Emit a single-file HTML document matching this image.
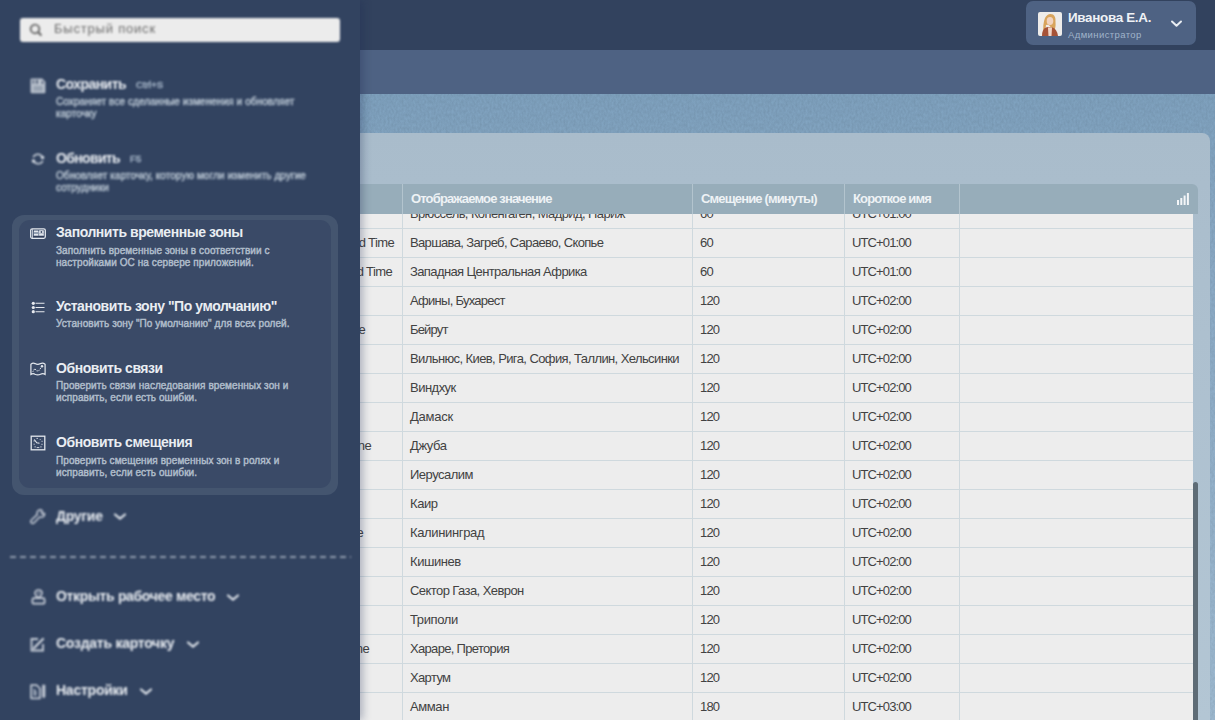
<!DOCTYPE html>
<html><head><meta charset="utf-8">
<style>
*{margin:0;padding:0;box-sizing:border-box}
html,body{width:1215px;height:720px;overflow:hidden}
body{position:relative;font-family:"Liberation Sans",sans-serif;background:#7b9db9}
.abs{position:absolute}
#hdr{left:0;top:0;width:1215px;height:50px;background:#32425e}
#band{left:0;top:50px;width:1215px;height:44px;background:#4e6283}
#tex{left:0;top:94px;width:1215px;height:626px;background:linear-gradient(180deg,#7fa2bf 0px,#89a9c5 110px,#9fbbd2 626px)}
#card{left:200px;top:133px;width:1010px;height:620px;background:linear-gradient(180deg,#a9bccb 0px,#adc0cf 200px,#b3c6d4 587px);border-radius:8px}
#thead{left:240px;top:184px;width:958px;height:30px;background:#97adba;border-radius:0 6px 0 0}
#tbody{left:240px;top:214px;width:953px;height:506px;background:#ededed;overflow:hidden}
.row{position:absolute;left:0;width:953px;height:29px;border-bottom:1px solid #cfd9de}
.c{position:absolute;top:0;height:29px;line-height:27px;font-size:13px;color:#424242;white-space:nowrap;letter-spacing:-0.63px}
.vl{position:absolute;top:0;width:1px;background:#cfd9de;height:506px}
.hl{position:absolute;top:0;width:1px;background:#b3c4ce;height:30px}
.ht{position:absolute;top:0;line-height:30px;font-size:13px;font-weight:bold;color:#eef2f5;white-space:nowrap;letter-spacing:-0.85px}
#sb{left:1193px;top:482px;width:5px;height:260px;background:#5e6c76;border-radius:3px}
#user{left:1026px;top:1px;width:170px;height:44px;background:#4e6283;border-radius:7px}
#panel{left:0;top:0;width:360px;height:720px;background:#324360;box-shadow:3px 0 8px rgba(25,40,80,.3)}
.blur{filter:blur(0.8px)}
.blur .d{-webkit-text-stroke:0.55px #aebbc9;color:#aebbc9}
.blur .k{-webkit-text-stroke:0.5px #a3b3c6;color:#a3b3c6}
.t{position:absolute;font-size:14px;font-weight:bold;color:#e9edf2;white-space:nowrap;letter-spacing:-0.45px}
.d{position:absolute;font-size:10px;color:#afbcca;white-space:nowrap;line-height:12px;-webkit-text-stroke:0.45px #afbcca;letter-spacing:0.08px}
.k{position:absolute;font-size:9.5px;color:#9aabbf;-webkit-text-stroke:0.35px #9aabbf;white-space:nowrap;letter-spacing:0.1px}
#grp{left:12px;top:215px;width:326px;height:280px;background:#44556f;border-radius:12px}
#grpin{left:19px;top:219.5px;width:312px;height:268.5px;background:#3a4a67;border-radius:11px}
.chev{position:absolute;width:7px;height:7px;border-right:2px solid #dfe4ea;border-bottom:2px solid #dfe4ea;transform:rotate(45deg)}
</style></head><body>
<div class="abs" id="hdr"></div>
<div class="abs" id="band"></div>
<div class="abs" id="tex"></div>
<svg class="abs" style="left:0;top:94px;opacity:0.07" width="1215" height="626"><filter id="nz"><feTurbulence type="fractalNoise" baseFrequency="0.5 0.3" numOctaves="2" seed="3"/><feColorMatrix values="0 0 0 0 0  0 0 0 0 0  0 0 0 0 0  0 0 0 1.6 -0.3"/></filter><rect width="1215" height="626" filter="url(#nz)"/></svg>
<div class="abs" id="card"></div>
<div class="abs" id="thead">
  <div class="hl" style="left:162px"></div>
  <div class="hl" style="left:452px"></div>
  <div class="hl" style="left:604px"></div>
  <div class="hl" style="left:719px"></div>
  <div class="ht" style="left:171px">Отображаемое значение</div>
  <div class="ht" style="left:461px">Смещение (минуты)</div>
  <div class="ht" style="left:613px">Короткое имя</div>
  <svg class="abs" style="left:937px;top:9px" width="12" height="12" viewBox="0 0 12 12"><rect x="0" y="7" width="2" height="5" fill="#f4f6f8"/><rect x="3.3" y="5" width="2" height="7" fill="#f4f6f8"/><rect x="6.6" y="2.5" width="2" height="9.5" fill="#f4f6f8"/><rect x="9.9" y="0" width="2" height="12" fill="#f4f6f8"/></svg>
</div>
<div class="abs" id="tbody"><div class="row" style="top:-14.4px"><div class="c" style="left:170px;letter-spacing:-0.600px">Брюссель, Копенгаген, Мадрид, Париж</div><div class="c" style="left:460px;letter-spacing:-0.800px">60</div><div class="c" style="left:612px;letter-spacing:-0.880px">UTC+01:00</div></div><div class="row" style="top:14.6px"><div class="c r" style="right:799px">d Time</div><div class="c" style="left:170px;letter-spacing:-0.645px">Варшава, Загреб, Сараево, Скопье</div><div class="c" style="left:460px;letter-spacing:-0.800px">60</div><div class="c" style="left:612px;letter-spacing:-0.880px">UTC+01:00</div></div><div class="row" style="top:43.6px"><div class="c r" style="right:801px">d Time</div><div class="c" style="left:170px;letter-spacing:-0.608px">Западная Центральная Африка</div><div class="c" style="left:460px;letter-spacing:-0.800px">60</div><div class="c" style="left:612px;letter-spacing:-0.880px">UTC+01:00</div></div><div class="row" style="top:72.6px"><div class="c" style="left:170px;letter-spacing:-0.729px">Афины, Бухарест</div><div class="c" style="left:460px;letter-spacing:-0.800px">120</div><div class="c" style="left:612px;letter-spacing:-0.880px">UTC+02:00</div></div><div class="row" style="top:101.6px"><div class="c r" style="right:828px">e</div><div class="c" style="left:170px;letter-spacing:-0.840px">Бейрут</div><div class="c" style="left:460px;letter-spacing:-0.800px">120</div><div class="c" style="left:612px;letter-spacing:-0.880px">UTC+02:00</div></div><div class="row" style="top:130.6px"><div class="c" style="left:170px;letter-spacing:-0.600px">Вильнюс, Киев, Рига, София, Таллин, Хельсинки</div><div class="c" style="left:460px;letter-spacing:-0.800px">120</div><div class="c" style="left:612px;letter-spacing:-0.880px">UTC+02:00</div></div><div class="row" style="top:159.6px"><div class="c" style="left:170px;letter-spacing:-0.517px">Виндхук</div><div class="c" style="left:460px;letter-spacing:-0.800px">120</div><div class="c" style="left:612px;letter-spacing:-0.880px">UTC+02:00</div></div><div class="row" style="top:188.6px"><div class="c" style="left:170px;letter-spacing:-0.240px">Дамаск</div><div class="c" style="left:460px;letter-spacing:-0.800px">120</div><div class="c" style="left:612px;letter-spacing:-0.880px">UTC+02:00</div></div><div class="row" style="top:217.6px"><div class="c r" style="right:822px">ne</div><div class="c" style="left:170px;letter-spacing:-0.425px">Джуба</div><div class="c" style="left:460px;letter-spacing:-0.800px">120</div><div class="c" style="left:612px;letter-spacing:-0.880px">UTC+02:00</div></div><div class="row" style="top:246.6px"><div class="c" style="left:170px;letter-spacing:-0.500px">Иерусалим</div><div class="c" style="left:460px;letter-spacing:-0.800px">120</div><div class="c" style="left:612px;letter-spacing:-0.880px">UTC+02:00</div></div><div class="row" style="top:275.6px"><div class="c" style="left:170px;letter-spacing:-0.433px">Каир</div><div class="c" style="left:460px;letter-spacing:-0.800px">120</div><div class="c" style="left:612px;letter-spacing:-0.880px">UTC+02:00</div></div><div class="row" style="top:304.6px"><div class="c r" style="right:830px">e</div><div class="c" style="left:170px;letter-spacing:-0.350px">Калининград</div><div class="c" style="left:460px;letter-spacing:-0.800px">120</div><div class="c" style="left:612px;letter-spacing:-0.880px">UTC+02:00</div></div><div class="row" style="top:333.6px"><div class="c" style="left:170px;letter-spacing:-0.433px">Кишинев</div><div class="c" style="left:460px;letter-spacing:-0.800px">120</div><div class="c" style="left:612px;letter-spacing:-0.880px">UTC+02:00</div></div><div class="row" style="top:362.6px"><div class="c" style="left:170px;letter-spacing:-0.572px">Сектор Газа, Хеврон</div><div class="c" style="left:460px;letter-spacing:-0.800px">120</div><div class="c" style="left:612px;letter-spacing:-0.880px">UTC+02:00</div></div><div class="row" style="top:391.6px"><div class="c" style="left:170px;letter-spacing:-0.367px">Триполи</div><div class="c" style="left:460px;letter-spacing:-0.800px">120</div><div class="c" style="left:612px;letter-spacing:-0.880px">UTC+02:00</div></div><div class="row" style="top:420.6px"><div class="c r" style="right:824px">ne</div><div class="c" style="left:170px;letter-spacing:-0.680px">Хараре, Претория</div><div class="c" style="left:460px;letter-spacing:-0.800px">120</div><div class="c" style="left:612px;letter-spacing:-0.880px">UTC+02:00</div></div><div class="row" style="top:449.6px"><div class="c" style="left:170px;letter-spacing:-0.640px">Хартум</div><div class="c" style="left:460px;letter-spacing:-0.800px">120</div><div class="c" style="left:612px;letter-spacing:-0.880px">UTC+02:00</div></div><div class="row" style="top:478.6px"><div class="c" style="left:170px;letter-spacing:-0.400px">Амман</div><div class="c" style="left:460px;letter-spacing:-0.800px">180</div><div class="c" style="left:612px;letter-spacing:-0.880px">UTC+03:00</div></div><div class="vl" style="left:162px"></div><div class="vl" style="left:452px"></div><div class="vl" style="left:604px"></div><div class="vl" style="left:719px"></div></div>
<div class="abs" id="sb"></div>
<div class="abs" id="user"></div>
<svg class="abs" style="left:1038px;top:12px" width="24" height="24" viewBox="0 0 24 24"><rect width="24" height="24" rx="2" fill="#eeecea"/><path d="M5.5 22 Q4.5 12 7 6 Q10 0.5 15 2.5 Q18 4.5 17.5 10 Q18 16 16 19 L14 18 Q12 12 8 13 Q7 18 7.5 22z" fill="#d8a45c"/><ellipse cx="12" cy="9" rx="3.3" ry="4" fill="#f1d3c0"/><path d="M4 24 Q4 17 8 15.5 L10 15 L14.5 15.5 Q19 17 20 24z" fill="#a65338"/><path d="M10 15.5 L14 15.5 L13.5 24 L10.5 24z" fill="#f2d5c6"/></svg>
<div class="abs" style="left:1068px;top:9.8px;font-size:13.4px;font-weight:bold;color:#eef1f5;white-space:nowrap;letter-spacing:-0.3px">Иванова Е.А.</div>
<div class="abs" style="left:1068px;top:28.5px;font-size:9.5px;color:#a0b4ca;white-space:nowrap;letter-spacing:0.4px">Администратор</div>
<svg class="abs" style="left:1170.3px;top:18.5px" width="14" height="9" viewBox="0 0 14 9"><path d="M2 2.5 L6.5 6.8 L11 2.5" fill="none" stroke="#e8ecf1" stroke-width="2" stroke-linecap="round" stroke-linejoin="round"/></svg>

<div class="abs" id="panel">
<div class="abs blur" style="left:0;top:0;width:360px;height:720px">
  <div class="abs" id="search" style="left:20px;top:18px;width:320px;height:24px;background:#ececec;border-radius:3px"></div>
  <svg class="abs" style="left:29px;top:23px" width="14" height="14" viewBox="0 0 14 14"><circle cx="6" cy="5.9" r="4.3" fill="none" stroke="#6a6a6a" stroke-width="1.9"/><path d="M9.3 9.2 L11.8 11.9" stroke="#6a6a6a" stroke-width="2.2" stroke-linecap="round"/></svg>
  <div class="abs" style="left:54px;top:17px;line-height:24px;font-size:13px;color:#6c6c6c;letter-spacing:0.8px">Быстрый поиск</div>

  <svg class="abs ic" style="left:30px;top:77.5px" width="16" height="16" viewBox="0 0 16 16"><path d="M0.6 1.6 Q0.6 0.6 1.6 0.6 H12.2 L15.4 3.8 V14.2 Q15.4 15.2 14.4 15.2 H1.6 Q0.6 15.2 0.6 14.2 Z" fill="#bcc4cf"/><rect x="2.6" y="1.8" width="1.6" height="4" fill="#55627a"/><rect x="6" y="1.8" width="2" height="4" fill="#55627a"/><rect x="11.6" y="3" width="1.8" height="3" fill="#55627a"/><rect x="2.8" y="7.6" width="10.4" height="6" fill="#a3adbb"/><path d="M4.5 9.2h7.5M4.5 11.4h7.5" stroke="#8893a4" stroke-width="0.8"/></svg>
  <div class="t" style="left:56px;top:76.3px;letter-spacing:-0.55px">Сохранить</div>
  <div class="k" style="left:136px;top:78.6px">Ctrl+S</div>
  <div class="d" style="left:56px;top:96.4px">Сохраняет все сделанные изменения и обновляет<br>карточку</div>

  <svg class="abs ic" style="left:31px;top:152px" width="14" height="14" viewBox="0 0 14 14"><path d="M2.2 5.2 A5 5 0 0 1 11.5 5.5" fill="none" stroke="#c9d0da" stroke-width="1.6"/><path d="M11.8 8.8 A5 5 0 0 1 2.5 8.5" fill="none" stroke="#c9d0da" stroke-width="1.6"/><circle cx="11.5" cy="5.5" r="1.8" fill="#d5dbe3"/><circle cx="2.5" cy="9" r="1.8" fill="#d5dbe3"/></svg>
  <div class="t" style="left:56px;top:150.0px;letter-spacing:-0.65px">Обновить</div>
  <div class="k" style="left:130px;top:152.6px">F5</div>
  <div class="d" style="left:56px;top:170.4px">Обновляет карточку, которую могли изменить другие<br>сотрудники</div>

  <svg class="abs ic" style="left:30px;top:509px" width="16" height="16" viewBox="0 0 16 16"><path d="M8.8 1.2 Q11.6 0.2 12.4 2.4 L11.4 3.9 L12.6 5 L14.4 4.2 Q15.2 7 12.4 8 Q11 8.4 9.9 7.8 L4.4 13.6 Q2.6 15.2 1.3 13.8 Q0 12.4 1.7 10.8 L7.4 5.4 Q6.8 4.2 7.2 3 Q7.6 1.7 8.8 1.2 Z" fill="none" stroke="#c5ccd7" stroke-width="1.5" stroke-linejoin="round"/></svg>
  <div class="t" style="left:56px;top:507.7px;letter-spacing:-0.28px">Другие</div>
  <svg class="abs" style="left:113px;top:512.2px" width="14" height="9" viewBox="0 0 14 9"><path d="M2 2.5 L7 6.7 L12 2.5" fill="none" stroke="#dde2e9" stroke-width="2.2" stroke-linecap="round" stroke-linejoin="round"/></svg>

  <div class="abs" style="left:10px;top:556px;width:341px;height:2px;background:repeating-linear-gradient(90deg,#8f9aab 0 6px,transparent 6px 10px)"></div>

  <svg class="abs ic" style="left:31px;top:589px" width="15" height="16" viewBox="0 0 15 16"><path d="M7.5 1 C9.8 1 11 2.6 11 4.3 C11 5.9 9.6 6.9 8.6 8.2 H6.4 C5.4 6.9 4 5.9 4 4.3 C4 2.6 5.2 1 7.5 1 Z" fill="none" stroke="#cbd1db" stroke-width="1.6"/><circle cx="7.5" cy="4.2" r="0.9" fill="#cbd1db"/><path d="M3 9.2 H12 Q13.6 9.2 13.6 10.8 V13.6 Q13.6 14.6 12.6 14.6 H2.4 Q1.4 14.6 1.4 13.6 V10.8 Q1.4 9.2 3 9.2 Z" fill="none" stroke="#cbd1db" stroke-width="1.7"/></svg>
  <div class="t" style="left:56px;top:587.7px;letter-spacing:-0.34px">Открыть рабочее место</div>
  <svg class="abs" style="left:226.3px;top:593.2px" width="14" height="9" viewBox="0 0 14 9"><path d="M2 2.5 L7 6.7 L12 2.5" fill="none" stroke="#dde2e9" stroke-width="2.2" stroke-linecap="round" stroke-linejoin="round"/></svg>

  <svg class="abs ic" style="left:30px;top:637px" width="15" height="15" viewBox="0 0 15 15"><path d="M8 2H1.5v11.5H13V7" fill="none" stroke="#c9d0da" stroke-width="1.8"/><path d="M4 11 L13 2" stroke="#c9d0da" stroke-width="2.4" stroke-linecap="round"/></svg>
  <div class="t" style="left:56px;top:635.0px;letter-spacing:-0.26px">Создать карточку</div>
  <svg class="abs" style="left:185.5px;top:640.2px" width="14" height="9" viewBox="0 0 14 9"><path d="M2 2.5 L7 6.7 L12 2.5" fill="none" stroke="#dde2e9" stroke-width="2.2" stroke-linecap="round" stroke-linejoin="round"/></svg>

  <svg class="abs ic" style="left:30px;top:683.5px" width="16" height="16" viewBox="0 0 16 16"><path d="M1.1 1.1 H6.6 L10 4.5 V14.3 H1.1 Z" fill="none" stroke="#c3cad5" stroke-width="1.7" stroke-linejoin="round"/><path d="M3.4 4 L6.6 7 V11.8 H3.4 Z" fill="#9aa5b6"/><path d="M12.2 0.8 H15.3 V12.6 L13.75 14.6 L12.2 12.6 Z" fill="#c3cad5"/></svg>
  <div class="t" style="left:56px;top:681.7px;letter-spacing:-0.24px">Настройки</div>
  <svg class="abs" style="left:138.5px;top:686.9px" width="14" height="9" viewBox="0 0 14 9"><path d="M2 2.5 L7 6.7 L12 2.5" fill="none" stroke="#dde2e9" stroke-width="2.2" stroke-linecap="round" stroke-linejoin="round"/></svg>
 </div>
 <div class="abs" id="grp"></div>
 <div class="abs" id="grpin"></div>
 <svg class="abs" style="left:30px;top:227.5px" width="16" height="11" viewBox="0 0 16 11"><rect x="0.7" y="0.8" width="14.6" height="9.5" rx="1.5" fill="none" stroke="#e3e7ed" stroke-width="1.3"/><path d="M2.5 1.2v8.8" stroke="#d5dae2" stroke-width="0.8"/><rect x="3.6" y="2.6" width="10.4" height="5.2" fill="#8d99ad"/><rect x="4" y="2.6" width="4" height="1.5" fill="#e3e7ed"/><rect x="4" y="5.9" width="4" height="1.6" fill="#e3e7ed"/><rect x="9.2" y="2.3" width="4.4" height="3.2" fill="#e3e7ed"/><circle cx="11.4" cy="4" r="0.9" fill="#3a4a67"/><rect x="9.2" y="5.9" width="4.4" height="1.6" fill="#e3e7ed"/><rect x="3.6" y="8" width="10.4" height="0.9" fill="#2f3d57"/></svg>
 <div class="t s" style="left:56px;top:223.6px">Заполнить временные зоны</div>
 <div class="d s" style="left:56px;top:244.6px">Заполнить временные зоны в соответствии с<br>настройками ОС на сервере приложений.</div>

 <svg class="abs" style="left:31px;top:301px" width="15" height="13" viewBox="0 0 15 13"><circle cx="2.3" cy="2.3" r="1.6" fill="#e6e9ee"/><circle cx="2.3" cy="6.5" r="1.6" fill="#e6e9ee"/><circle cx="2.3" cy="10.7" r="1.6" fill="#e6e9ee"/><path d="M4.5 2.3h9M4.5 6.5h9M4.5 10.7h9" stroke="#e6e9ee" stroke-width="1.1"/></svg>
 <div class="t s" style="left:56px;top:297.8px">Установить зону "По умолчанию"</div>
 <div class="d s" style="left:56px;top:317.6px">Установить зону "По умолчанию" для всех ролей.</div>

 <svg class="abs" style="left:30px;top:362px" width="16" height="14" viewBox="0 0 16 14"><path d="M0.9 2.2 Q3 0.6 5 1.6 Q7.8 3.2 10.5 1.6 Q13 0.6 15.1 2.2 V12.4 Q13 11 10.5 12.2 Q7.8 13.6 5 12.2 Q3 11 0.9 12.4 Z" fill="none" stroke="#e3e7ed" stroke-width="1.2"/><path d="M2.8 9.8 L4.8 6.6 L6.8 9 L9 8.6 L11.8 4.5" fill="none" stroke="#e3e7ed" stroke-width="1" stroke-dasharray="1.3 0.9"/><circle cx="12" cy="4.2" r="1.2" fill="#e3e7ed"/></svg>
 <div class="t s" style="left:56px;top:360.3px">Обновить связи</div>
 <div class="d s" style="left:56px;top:380.4px">Проверить связи наследования временных зон и<br>исправить, если есть ошибки.</div>

 <svg class="abs" style="left:30px;top:435px" width="16" height="16" viewBox="0 0 16 16"><rect x="1.2" y="1.2" width="13.6" height="13.6" fill="none" stroke="#e3e7ed" stroke-width="1.3"/><path d="M4.2 4.5 L6.8 7.8 L9.5 8.2" fill="none" stroke="#e3e7ed" stroke-width="1.1"/><path d="M3.5 6h1.2M6.5 3.4h1.4M9.8 4.1l0.8 0.8M11.5 6.3h1.1M3.6 9.2h1.1M11.4 9.3h1.2M4.5 11.9h1.3M10.3 11.9h1.3M6.7 12.6h2.6" stroke="#dfe3ea" stroke-width="0.9"/></svg>
 <div class="t s" style="left:56px;top:433.8px">Обновить смещения</div>
 <div class="d s" style="left:56px;top:454.6px">Проверить смещения временных зон в ролях и<br>исправить, если есть ошибки.</div>
</div>
</body></html>
